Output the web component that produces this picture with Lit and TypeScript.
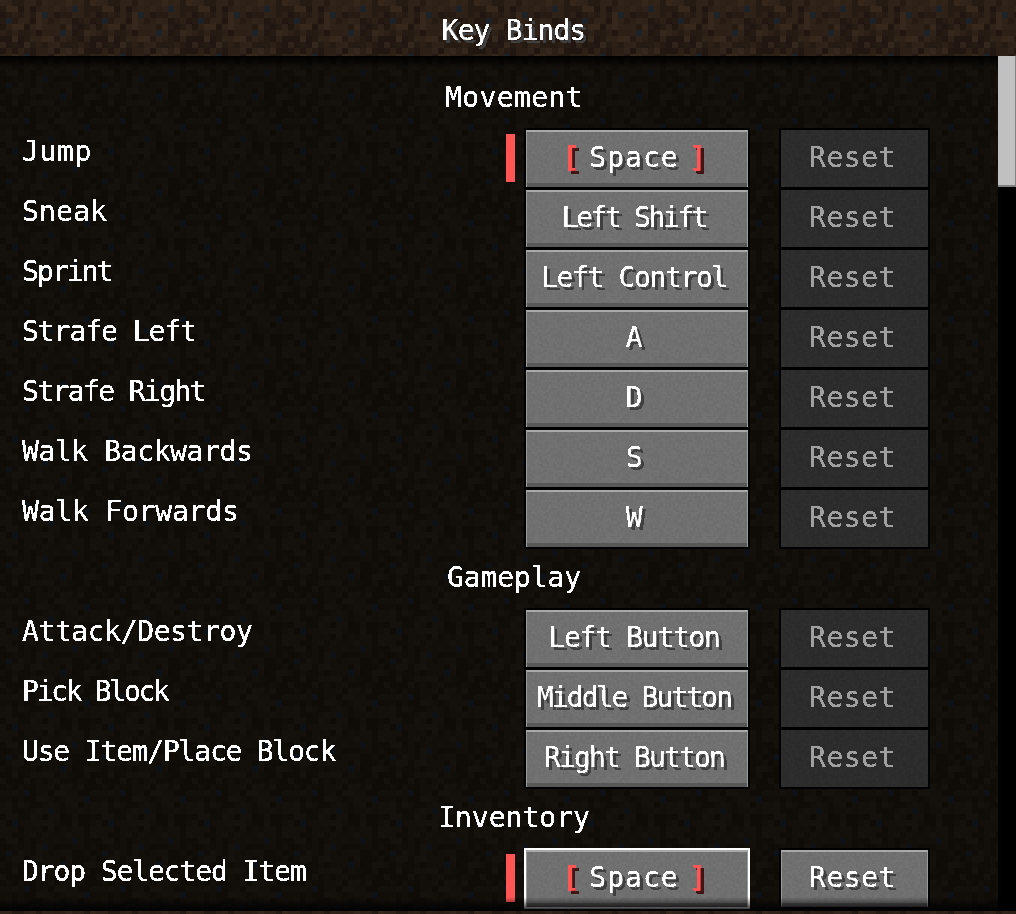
import { LitElement, html, css, unsafeCSS } from "lit";
import { customElement } from "lit/decorators.js";

function rng(seed: number) {
  let s = seed;
  return () => {
    s = (s * 1664525 + 1013904223) >>> 0;
    return (s >>> 8) / 16777216;
  };
}
function svgUri(size: number, body: string) {
  const svg = `<svg xmlns='http://www.w3.org/2000/svg' width='${size}' height='${size}' shape-rendering='crispEdges'>${body}</svg>`;
  return `data:image/svg+xml,${encodeURIComponent(svg)}`;
}
function dirt(bright: boolean) {
  const r = rng(77);
  const pal = bright
    ? ["#2c1f16", "#30231a", "#35271c", "#261b13", "#2e2117", "#211710"]
    : ["#120e0a", "#14100b", "#15110c", "#100d09", "#13100b", "#0f0c08"];
  const blue = bright ? "#1d2229" : "#0e1115";
  const spots = new Set(["12,1", "7,2", "1,3", "10,5", "4,9", "14,10", "8,12", "2,14"]);
  let b = "";
  for (let y = 0; y < 16; y++)
    for (let x = 0; x < 16; x++) {
      const c = spots.has(`${x},${y}`) ? blue : pal[Math.floor(r() * pal.length)];
      b += `<rect x='${x * 6}' y='${y * 6}' width='6' height='6' fill='${c}'/>`;
    }
  return svgUri(96, b);
}
function stone(base: number, spread: number) {
  const r = rng(31);
  let b = "";
  for (let y = 0; y < 48; y++)
    for (let x = 0; x < 48; x++) {
      const v = Math.round(base + (r() - 0.5) * spread);
      b += `<rect x='${x * 2}' y='${y * 2}' width='2' height='2' fill='rgb(${v},${v},${v})'/>`;
    }
  return svgUri(96, b);
}
const HEAD = unsafeCSS(dirt(true));
const LIST = unsafeCSS(dirt(false));
const STONE = unsafeCSS(stone(112, 7));
const DARK = unsafeCSS(stone(44, 5));

/* Tracking per string, to reach the widths of the proportional game font. */
const tracking: Record<string, number> = {
  "Key Binds": -0.9, Movement: 0.4, Gameplay: -0.1, Inventory: 0,
  Jump: 0.65, Sneak: 0.2, Sprint: -1.9, "Strafe Left": -1.05, "Strafe Right": -1.6,
  "Walk Backwards": -0.4, "Walk Forwards": -0.2, "Attack/Destroy": -0.4, "Pick Block": -2.3,
  "Use Item/Place Block": -1.2, "Drop Selected Item": -1.1,
  "Left Shift": -2.4, "Left Control": -1.35, "Left Button": -1.3, "Middle Button": -1.9,
  "Right Button": -1.85, Space: -1.05, Reset: 0.5,
};
const ls = (t: string) => `letter-spacing:${tracking[t] ?? -0.6}px`;

type Row = { label: string; key: string; conflict?: boolean; active?: boolean } | { section: string };
const rows: Row[] = [
  { section: "Movement" },
  { label: "Jump", key: "Space", conflict: true },
  { label: "Sneak", key: "Left Shift" },
  { label: "Sprint", key: "Left Control" },
  { label: "Strafe Left", key: "A" },
  { label: "Strafe Right", key: "D" },
  { label: "Walk Backwards", key: "S" },
  { label: "Walk Forwards", key: "W" },
  { section: "Gameplay" },
  { label: "Attack/Destroy", key: "Left Button" },
  { label: "Pick Block", key: "Middle Button" },
  { label: "Use Item/Place Block", key: "Right Button" },
  { section: "Inventory" },
  { label: "Drop Selected Item", key: "Space", conflict: true, active: true },
];

@customElement("app-root")
export class AppRoot extends LitElement {
  static styles = css`
    :host {
      display: flex;
      flex-direction: column;
      width: 1016px;
      height: 914px;
      overflow: hidden;
      background: #000;
      font-family: "DejaVu Sans Mono", monospace;
      font-size: 28px;
      color: #fff;
      line-height: 1;
    }
    .t { filter: url(#crisp); }
    .defs { width: 0; height: 0; flex: none; position: absolute; }
    .header, .footer { flex: none; background-image: url("${HEAD}"); }
    .header {
      height: 56px;
      display: flex;
      align-items: center;
      justify-content: center;
      padding: 6px 0 0 11px;
      box-sizing: border-box;
    }
    .footer { height: 3px; }
    .title { text-shadow: 3px 3px 0 #3f3f3f; }
    .body { flex: 1; display: flex; min-height: 0; }
    .list {
      flex: 1;
      position: relative;
      padding-top: 14px;
      box-sizing: border-box;
      background-image: url("${LIST}");
      background-position: 0 8px;
      overflow: hidden;
    }
    .list::before {
      content: "";
      position: absolute;
      inset: 0 0 auto 0;
      height: 12px;
      background: linear-gradient(#000, transparent);
    }
    .list::after {
      content: "";
      position: absolute;
      inset: auto 0 0 0;
      height: 14px;
      background: linear-gradient(transparent, rgba(0, 0, 0, 0.9));
    }
    .section {
      height: 60px;
      display: flex;
      align-items: center;
      justify-content: center;
      box-sizing: border-box;
      padding: 0 0 4px 30px;
      width: 998px;
    }
    .row { height: 60px; display: flex; align-items: flex-start; }
    .label { width: 506px; padding: 8px 0 0 22px; flex: none; white-space: pre; box-sizing: border-box; }
    .bar { width: 9px; height: 48px; margin-top: 4px; background: #ff5555; flex: none; }
    .bar.none { background: transparent; }
    .btn {
      flex: none;
      height: 57px;
      box-sizing: border-box;
      display: flex;
      align-items: center;
      justify-content: center;
      padding: 0 6px 3px 0;
      white-space: pre;
      position: relative;
      outline: 2px solid #000;
    }
    .on {
      background-image: url("${STONE}");
      border-top: 2px solid #a9a9a9;
      border-left: 1px solid #9a9a9a;
      border-right: 1px solid #9a9a9a;
      box-shadow: inset 0 -4px 0 #585858;
      text-shadow: 3px 3px 0 #3f3f3f;
    }
    .off {
      background-image: url("${DARK}");
      color: #a0a0a0;
      border-top: 2px solid transparent;
      background-origin: border-box;
    }
    .key { width: 222px; margin-left: 11px; }
    .reset { width: 147px; margin-left: 33px; padding-right: 4px; }
    .focus { outline: 2px solid #fff; }
    .bound { word-spacing: -5px; }
    .word { letter-spacing: 1px; }
    .red { color: #ff5555; text-shadow: 3px 3px 0 #3f1515; font-weight: 700; }
    .scroll { width: 18px; flex: none; background: #000; }
    .thumb {
      height: 131px;
      box-sizing: border-box;
      background: #c0c0c0;
      border-right: 1px solid #808080;
      border-bottom: 2px solid #808080;
    }
  `;

  renderRow(r: Row) {
    if ("section" in r)
      return html`<div class="section"><span class="t" style=${ls(r.section)}>${r.section}</span></div>`;
    const key = r.conflict
      ? html`<span class="bound"><span class="red">[</span> <span class="word">${r.key}</span> <span class="red">]</span></span>`
      : r.key;
    return html`<div class="row">
      <div class="label"><span class="t" style=${ls(r.label)}>${r.label}</span></div>
      <div class="bar ${r.conflict ? "" : "none"}"></div>
      <div class="btn key on ${r.active ? "focus" : ""}"><span class="t" style=${ls(r.key)}>${key}</span></div>
      <div class="btn reset ${r.active ? "on" : "off"}"><span class="t" style=${ls("Reset")}>Reset</span></div>
    </div>`;
  }

  render() {
    return html`
      <svg class="defs" aria-hidden="true"><filter id="crisp" x="-5%" y="-5%" width="115%" height="115%" color-interpolation-filters="sRGB">
        <feComponentTransfer><feFuncA type="discrete" tableValues="0 1 1"></feFuncA></feComponentTransfer>
      </filter></svg>
      <div class="header"><span class="title t" style=${ls("Key Binds")}>Key Binds</span></div>
      <div class="body">
        <div class="list">${rows.map((r) => this.renderRow(r))}</div>
        <div class="scroll"><div class="thumb"></div></div>
      </div>
      <div class="footer"></div>
    `;
  }
}
